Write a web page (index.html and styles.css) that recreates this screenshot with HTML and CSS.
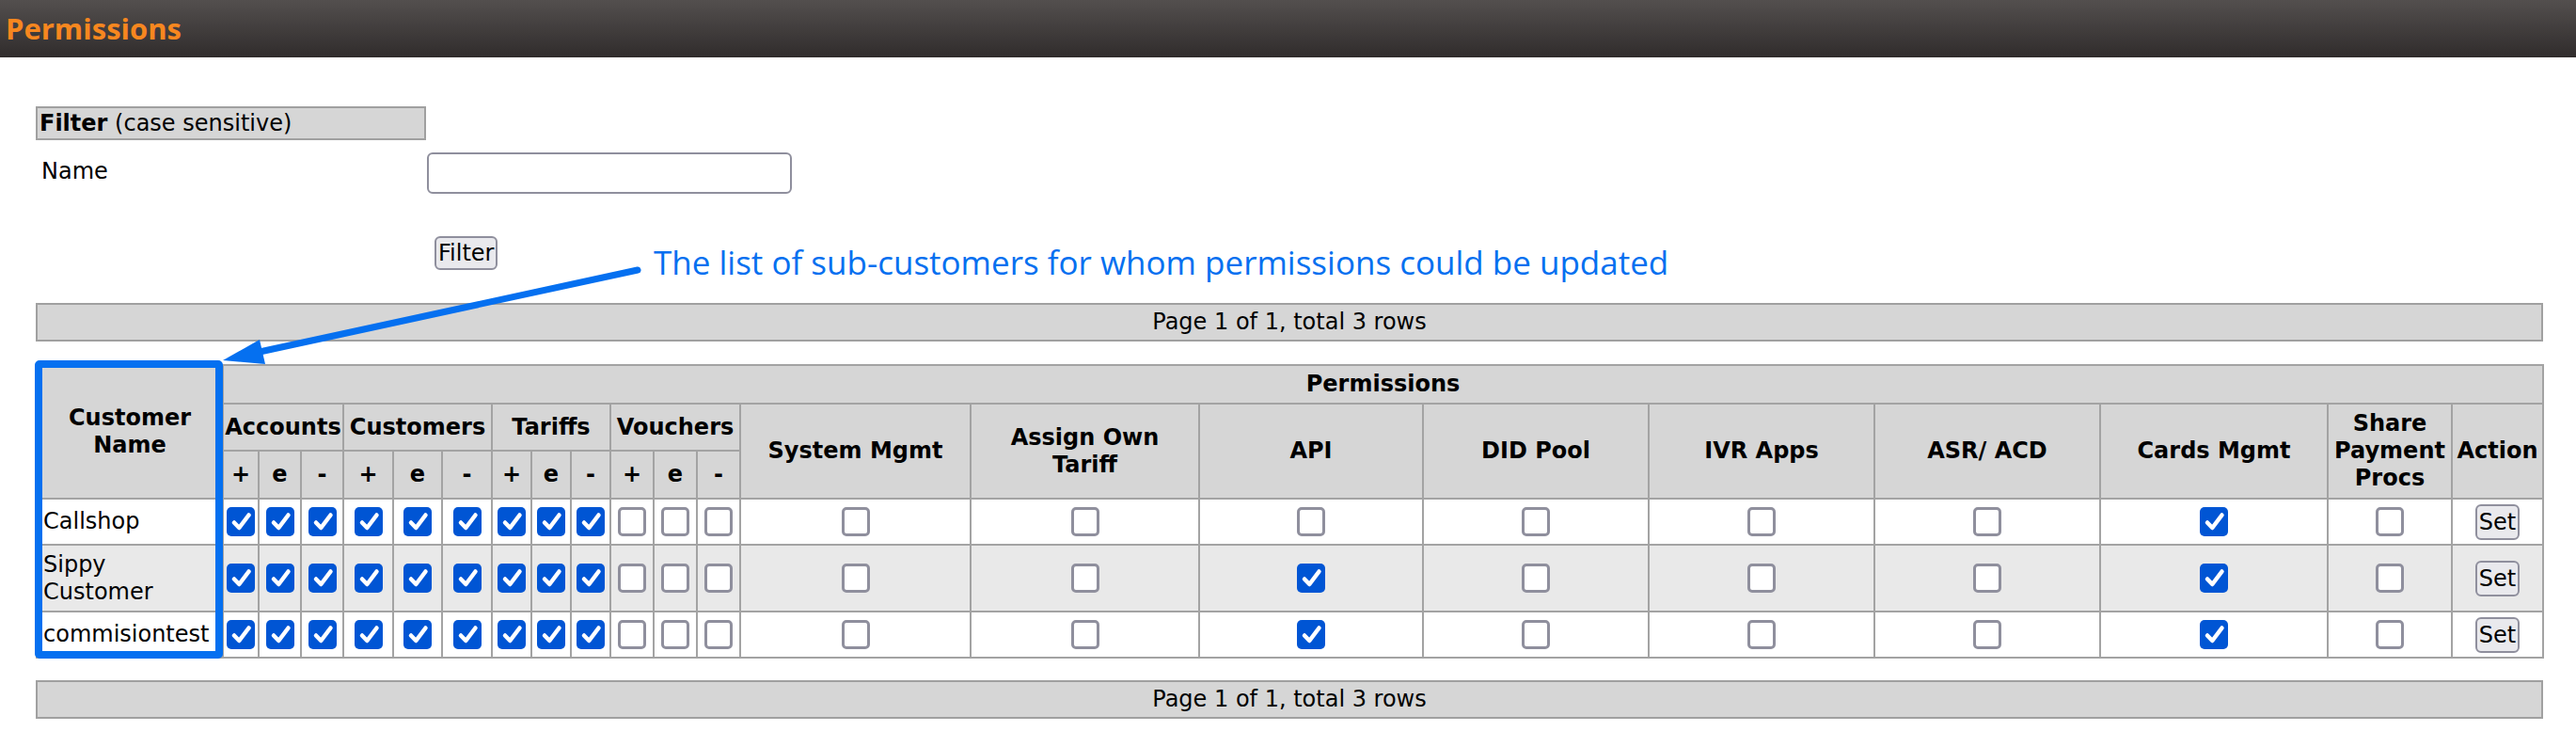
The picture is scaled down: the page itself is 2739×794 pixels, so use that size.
FILE: index.html
```html
<!DOCTYPE html>
<html lang="en">
<head>
<meta charset="utf-8">
<title>Permissions</title>
<link rel="stylesheet" href="styles.css">
</head>
<body>
<div class="page">
  <header class="topbar"><h1>Permissions</h1></header>
  <main class="content">
    <section class="filter">
      <div class="filter-head"><b>Filter</b> (case sensitive)</div>
      <div class="filter-row">
        <label for="fname">Name</label>
        <input id="fname" class="text-in" type="text">
      </div>
      <div class="filter-actions"><button class="btn">Filter</button></div>
    </section>

    <div class="pager">Page 1 of 1, total 3 rows</div>

    <table class="perm">
      <colgroup>
        <col class="w-name"><col class="w38"><col class="w45"><col class="w45"><col class="w53"><col class="w52"><col class="w53"><col class="w42"><col class="w42"><col class="w42"><col class="w46"><col class="w46"><col class="w46"><col class="w245"><col class="w243"><col class="w238"><col class="w240"><col class="w240"><col class="w240"><col class="w242"><col class="w132"><col class="w97">
      </colgroup>
      <thead>
        <tr class="h1"><th rowspan="3" class="cust">Customer Name</th><th colspan="21">Permissions</th></tr>
        <tr class="h2"><th colspan="3" class="grp">Accounts</th><th colspan="3" class="grp">Customers</th><th colspan="3" class="grp">Tariffs</th><th colspan="3" class="grp">Vouchers</th><th rowspan="2">System Mgmt</th><th rowspan="2">Assign Own Tariff</th><th rowspan="2">API</th><th rowspan="2">DID Pool</th><th rowspan="2">IVR Apps</th><th rowspan="2">ASR/ ACD</th><th rowspan="2">Cards Mgmt</th><th rowspan="2">Share Payment Procs</th><th rowspan="2">Action</th></tr>
        <tr class="h3"><th class="grp">+</th><th class="grp">e</th><th class="grp">-</th><th class="grp">+</th><th class="grp">e</th><th class="grp">-</th><th class="grp">+</th><th class="grp">e</th><th class="grp">-</th><th class="grp">+</th><th class="grp">e</th><th class="grp">-</th></tr>
      </thead>
      <tbody>
        <tr class="r1">
          <td class="name">Callshop</td>
          <td class="c"><span class="cb on"><svg viewBox="0 0 30 31"><path d="M8 16.5 L13.3 22 L23.5 8.5"/></svg></span></td>
          <td class="c"><span class="cb on"><svg viewBox="0 0 30 31"><path d="M8 16.5 L13.3 22 L23.5 8.5"/></svg></span></td>
          <td class="c"><span class="cb on"><svg viewBox="0 0 30 31"><path d="M8 16.5 L13.3 22 L23.5 8.5"/></svg></span></td>
          <td class="c"><span class="cb on"><svg viewBox="0 0 30 31"><path d="M8 16.5 L13.3 22 L23.5 8.5"/></svg></span></td>
          <td class="c"><span class="cb on"><svg viewBox="0 0 30 31"><path d="M8 16.5 L13.3 22 L23.5 8.5"/></svg></span></td>
          <td class="c"><span class="cb on"><svg viewBox="0 0 30 31"><path d="M8 16.5 L13.3 22 L23.5 8.5"/></svg></span></td>
          <td class="c"><span class="cb on"><svg viewBox="0 0 30 31"><path d="M8 16.5 L13.3 22 L23.5 8.5"/></svg></span></td>
          <td class="c"><span class="cb on"><svg viewBox="0 0 30 31"><path d="M8 16.5 L13.3 22 L23.5 8.5"/></svg></span></td>
          <td class="c"><span class="cb on"><svg viewBox="0 0 30 31"><path d="M8 16.5 L13.3 22 L23.5 8.5"/></svg></span></td>
          <td class="c"><span class="cb"></span></td>
          <td class="c"><span class="cb"></span></td>
          <td class="c"><span class="cb"></span></td>
          <td class="c"><span class="cb"></span></td>
          <td class="c"><span class="cb"></span></td>
          <td class="c"><span class="cb"></span></td>
          <td class="c"><span class="cb"></span></td>
          <td class="c"><span class="cb"></span></td>
          <td class="c"><span class="cb"></span></td>
          <td class="c"><span class="cb on"><svg viewBox="0 0 30 31"><path d="M8 16.5 L13.3 22 L23.5 8.5"/></svg></span></td>
          <td class="c"><span class="cb"></span></td>
          <td class="c"><button class="btn set">Set</button></td>
        </tr>
        <tr class="r2">
          <td class="name">Sippy Customer</td>
          <td class="c"><span class="cb on"><svg viewBox="0 0 30 31"><path d="M8 16.5 L13.3 22 L23.5 8.5"/></svg></span></td>
          <td class="c"><span class="cb on"><svg viewBox="0 0 30 31"><path d="M8 16.5 L13.3 22 L23.5 8.5"/></svg></span></td>
          <td class="c"><span class="cb on"><svg viewBox="0 0 30 31"><path d="M8 16.5 L13.3 22 L23.5 8.5"/></svg></span></td>
          <td class="c"><span class="cb on"><svg viewBox="0 0 30 31"><path d="M8 16.5 L13.3 22 L23.5 8.5"/></svg></span></td>
          <td class="c"><span class="cb on"><svg viewBox="0 0 30 31"><path d="M8 16.5 L13.3 22 L23.5 8.5"/></svg></span></td>
          <td class="c"><span class="cb on"><svg viewBox="0 0 30 31"><path d="M8 16.5 L13.3 22 L23.5 8.5"/></svg></span></td>
          <td class="c"><span class="cb on"><svg viewBox="0 0 30 31"><path d="M8 16.5 L13.3 22 L23.5 8.5"/></svg></span></td>
          <td class="c"><span class="cb on"><svg viewBox="0 0 30 31"><path d="M8 16.5 L13.3 22 L23.5 8.5"/></svg></span></td>
          <td class="c"><span class="cb on"><svg viewBox="0 0 30 31"><path d="M8 16.5 L13.3 22 L23.5 8.5"/></svg></span></td>
          <td class="c"><span class="cb"></span></td>
          <td class="c"><span class="cb"></span></td>
          <td class="c"><span class="cb"></span></td>
          <td class="c"><span class="cb"></span></td>
          <td class="c"><span class="cb"></span></td>
          <td class="c"><span class="cb on"><svg viewBox="0 0 30 31"><path d="M8 16.5 L13.3 22 L23.5 8.5"/></svg></span></td>
          <td class="c"><span class="cb"></span></td>
          <td class="c"><span class="cb"></span></td>
          <td class="c"><span class="cb"></span></td>
          <td class="c"><span class="cb on"><svg viewBox="0 0 30 31"><path d="M8 16.5 L13.3 22 L23.5 8.5"/></svg></span></td>
          <td class="c"><span class="cb"></span></td>
          <td class="c"><button class="btn set">Set</button></td>
        </tr>
        <tr class="r3">
          <td class="name">commisiontest</td>
          <td class="c"><span class="cb on"><svg viewBox="0 0 30 31"><path d="M8 16.5 L13.3 22 L23.5 8.5"/></svg></span></td>
          <td class="c"><span class="cb on"><svg viewBox="0 0 30 31"><path d="M8 16.5 L13.3 22 L23.5 8.5"/></svg></span></td>
          <td class="c"><span class="cb on"><svg viewBox="0 0 30 31"><path d="M8 16.5 L13.3 22 L23.5 8.5"/></svg></span></td>
          <td class="c"><span class="cb on"><svg viewBox="0 0 30 31"><path d="M8 16.5 L13.3 22 L23.5 8.5"/></svg></span></td>
          <td class="c"><span class="cb on"><svg viewBox="0 0 30 31"><path d="M8 16.5 L13.3 22 L23.5 8.5"/></svg></span></td>
          <td class="c"><span class="cb on"><svg viewBox="0 0 30 31"><path d="M8 16.5 L13.3 22 L23.5 8.5"/></svg></span></td>
          <td class="c"><span class="cb on"><svg viewBox="0 0 30 31"><path d="M8 16.5 L13.3 22 L23.5 8.5"/></svg></span></td>
          <td class="c"><span class="cb on"><svg viewBox="0 0 30 31"><path d="M8 16.5 L13.3 22 L23.5 8.5"/></svg></span></td>
          <td class="c"><span class="cb on"><svg viewBox="0 0 30 31"><path d="M8 16.5 L13.3 22 L23.5 8.5"/></svg></span></td>
          <td class="c"><span class="cb"></span></td>
          <td class="c"><span class="cb"></span></td>
          <td class="c"><span class="cb"></span></td>
          <td class="c"><span class="cb"></span></td>
          <td class="c"><span class="cb"></span></td>
          <td class="c"><span class="cb on"><svg viewBox="0 0 30 31"><path d="M8 16.5 L13.3 22 L23.5 8.5"/></svg></span></td>
          <td class="c"><span class="cb"></span></td>
          <td class="c"><span class="cb"></span></td>
          <td class="c"><span class="cb"></span></td>
          <td class="c"><span class="cb on"><svg viewBox="0 0 30 31"><path d="M8 16.5 L13.3 22 L23.5 8.5"/></svg></span></td>
          <td class="c"><span class="cb"></span></td>
          <td class="c"><button class="btn set">Set</button></td>
        </tr>
      </tbody>
    </table>

    <div class="pager bottom">Page 1 of 1, total 3 rows</div>
  </main>

  <div class="note">The list of sub-customers for whom permissions could be updated</div>
  <svg class="arrow" viewBox="0 0 2739 794" aria-hidden="true">
    <line x1="678" y1="287" x2="276" y2="374" stroke="#0570f0" stroke-width="7" stroke-linecap="round"/>
    <polygon points="237,383 276,361 282,387" fill="#0570f0"/>
  </svg>
  <div class="highlight"></div>
</div>
</body>
</html>
```

FILE: styles.css
```css
* { box-sizing: border-box; }

body {
  margin: 0;
  font-family: "DejaVu Sans", Verdana, sans-serif;
  font-size: 24px;
  color: #000;
  background: #fff;
}

.page {
  position: relative;
  width: 2739px;
  min-height: 794px;
}

.topbar {
  height: 61px;
  background: linear-gradient(#534f4e, #302c2c);
  display: flex;
  align-items: center;
  padding-left: 6px;
}

.topbar h1 {
  margin: 0;
  font-family: "Open Sans", "Noto Sans", sans-serif;
  font-weight: 700;
  font-size: 31px;
  line-height: 1;
  color: #f7871f;
}

.content {
  padding-left: 38px;
}

.filter {
  margin-top: 52px;
}

.filter-head {
  width: 415px;
  height: 36px;
  border: 2px solid #a0a0a0;
  background: #d6d6d6;
  line-height: 32px;
  padding-left: 2px;
  white-space: nowrap;
}

.filter-row {
  display: grid;
  grid-template-columns: 416px 388px;
  margin-top: 13px;
}

.filter-row label {
  padding-left: 6px;
  margin-top: 6px;
  line-height: 28px;
}

.text-in {
  width: 388px;
  height: 44px;
  border: 2px solid #8f8f9d;
  border-radius: 6px;
  background: #fff;
  font: inherit;
  margin: 0;
}

.filter-actions {
  margin: 45px 0 0 424px;
}

.btn {
  font-family: "DejaVu Sans", Verdana, sans-serif;
  font-size: 24px;
  line-height: 32px;
  height: 36px;
  padding: 0 2px;
  margin: 0;
  border: 2px solid #8f8f9d;
  border-radius: 6px;
  background: #e9e9ed;
  color: #000;
}

.btn.set {
  height: 38px;
  line-height: 34px;
  vertical-align: middle;
}

.pager {
  width: 2666px;
  height: 41px;
  margin-top: 35px;
  border: 2px solid #a0a0a0;
  background: #d6d6d6;
  text-align: center;
  line-height: 37px;
}

.pager.bottom {
  margin-top: 23px;
}

.perm {
  border-collapse: collapse;
  table-layout: fixed;
  width: 2665px;
  margin-top: 24px;
}

.perm th,
.perm td {
  border: 2px solid #a3a3a3;
  padding: 0 2px;
}

.perm th {
  background: #d6d6d6;
  font-weight: 700;
  line-height: 29px;
  text-align: center;
  vertical-align: middle;
  padding: 0 4px;
}

.perm th.grp { padding: 0; white-space: nowrap; }

.perm td {
  text-align: center;
  vertical-align: middle;
  line-height: 29px;
  background: #fff;
}

.perm td.c { line-height: 0; padding: 0; }

.perm td.name {
  text-align: left;
  padding: 0 4px 0 6px;
}

.perm tr.r2 td { background: #e9e9e9; }

.perm tr.h1 { height: 41px; }
.perm tr.h2 { height: 50px; }
.perm tr.h3 { height: 51px; }
.perm tr.r1 { height: 49px; }
.perm tr.r2 { height: 71px; }
.perm tr.r3 { height: 49px; }

.w-name { width: 198px; }
.w38 { width: 38px; }
.w42 { width: 42px; }
.w45 { width: 45px; }
.w46 { width: 46px; }
.w52 { width: 52px; }
.w53 { width: 53px; }
.w97 { width: 97px; }
.w132 { width: 132px; }
.w238 { width: 238px; }
.w240 { width: 240px; }
.w242 { width: 242px; }
.w243 { width: 243px; }
.w245 { width: 245px; }

.cb {
  display: inline-block;
  vertical-align: middle;
  width: 30px;
  height: 31px;
  border: 3px solid #8f8f9d;
  border-radius: 5px;
  background: #fff;
}

.cb.on {
  border: 0;
  background: #0055d4;
}

.cb svg {
  display: block;
  width: 30px;
  height: 31px;
}

.cb svg path {
  fill: none;
  stroke: #fff;
  stroke-width: 4.5;
  stroke-linecap: round;
  stroke-linejoin: round;
}

.note {
  position: absolute;
  left: 695px;
  top: 259px;
  font-family: "Open Sans", "Noto Sans", sans-serif;
  font-size: 35px;
  line-height: 40px;
  color: #0570f0;
  white-space: nowrap;
}

.arrow {
  position: absolute;
  left: 0;
  top: 0;
  width: 2739px;
  height: 794px;
  pointer-events: none;
}

.highlight {
  position: absolute;
  left: 37px;
  top: 383px;
  width: 200px;
  height: 317px;
  border: 8px solid #0570f0;
  border-radius: 5px;
}
```
